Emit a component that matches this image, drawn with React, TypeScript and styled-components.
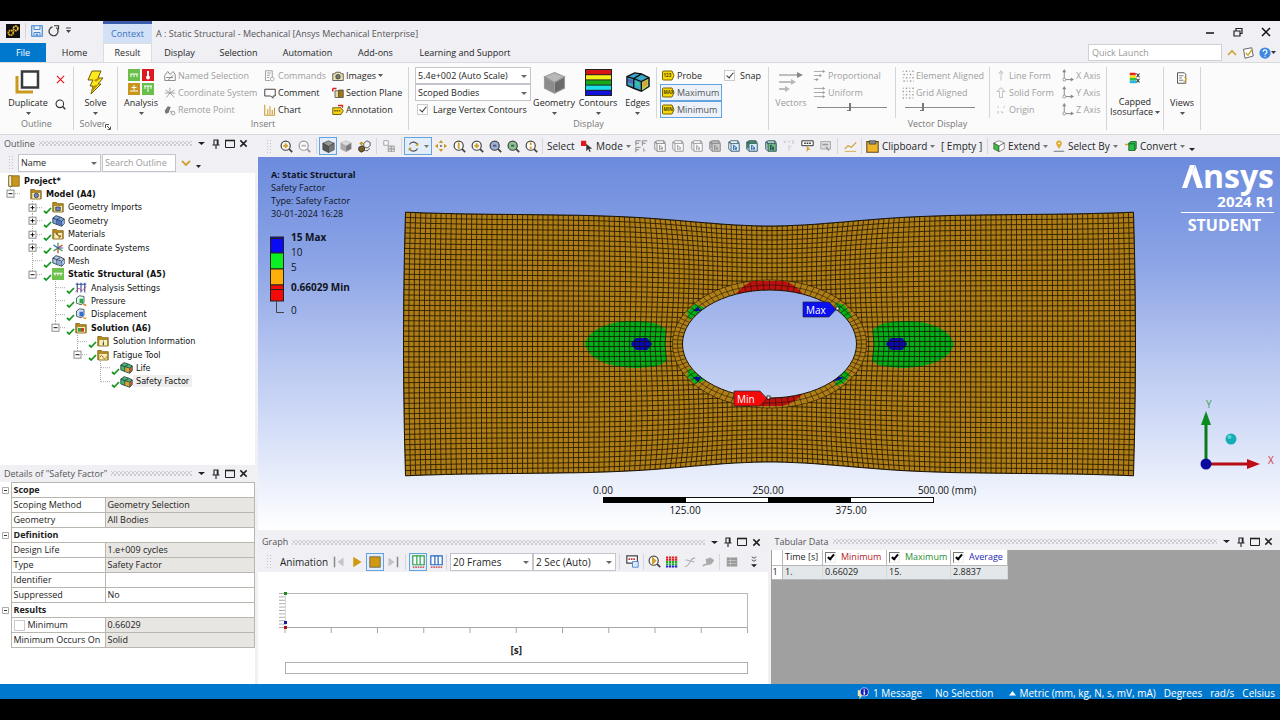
import React from "react";
import styled, { createGlobalStyle, css } from "styled-components";

const ui = `"Open Sans", "Noto Sans", sans-serif`;
const treeFont = `"DejaVu Sans Condensed", "DejaVu Sans", sans-serif`;

const GlobalStyle = createGlobalStyle`
  *, *::before, *::after { box-sizing: border-box; }
  body { margin: 0; background: #000; font-family: ${ui}; font-size: 9px; line-height: 12px; color: #262626; }
  button, input, select { font: inherit; color: inherit; margin: 0; }
  button { padding: 0; border: 0; background: none; cursor: pointer; }
  svg { display: block; flex: none; }
`;

/* ---------- frame ---------- */

const Page = styled.div`
  min-height: 100vh;
  display: flex;
  flex-direction: column;
  padding: 21px 0;
  background: #000;
`;

const Workspace = styled.main`
  flex: 1;
  display: flex;
  gap: 3px;
  background: #f0f0f5;
`;

const LeftDock = styled.aside`
  width: 255px;
  flex: none;
  display: flex;
  flex-direction: column;
`;

const Stage = styled.section`
  flex: 1;
  min-width: 0;
  display: flex;
  flex-direction: column;
`;

const BottomDock = styled.div`
  display: flex;
  gap: 3px;
  height: 151px;
  margin-top: 3px;
`;

const Panel = styled.section<{ $bg?: string }>`
  flex: 1;
  min-width: 0;
  display: flex;
  flex-direction: column;
  background: ${(p) => p.$bg || "#fff"};
`;

/* ---------- icons ---------- */

const Icon = ({ size = 12, vb = 16, children }: { size?: number; vb?: number; children: React.ReactNode }) => (
  <svg width={size} height={size} viewBox={`0 0 ${vb} ${vb}`} aria-hidden="true" fill="none">
    {children}
  </svg>
);

const Caret = ({ color = "#555", w = 5 }: { color?: string; w?: number }) => (
  <svg width={w} height="3" viewBox="0 0 6 3" aria-hidden="true" preserveAspectRatio="none">
    <path d="M0 0h6L3 3z" fill={color} />
  </svg>
);

const Cube = ({ top, left, right, size = 12, stroke = "#333" }: { top: string; left: string; right: string; size?: number; stroke?: string }) => (
  <Icon size={size}>
    <path d="M8 1l7 3-7 4-7-4z" fill={top} stroke={stroke} strokeWidth="0.7" />
    <path d="M1 4l7 4v7.500l-7-3.500z" fill={left} stroke={stroke} strokeWidth="0.7" />
    <path d="M15 4L8 8v7.500l7-3.500z" fill={right} stroke={stroke} strokeWidth="0.7" />
  </Icon>
);

const Zoomer = ({ inner, mark, ring = "#444", sign }: { inner?: string; mark?: string; ring?: string; sign?: string }) => (
  <Icon size={13}>
    <circle cx="7" cy="7" r="5.600" fill={inner || "#fff"} stroke={ring} strokeWidth="1.500" />
    <path d="M11 11l4 4" stroke={ring} strokeWidth="2.200" />
    {mark && <path d={sign || "M4 7h6M7 4v6"} stroke={mark} strokeWidth="2.400" />}
  </Icon>
);

const Blocks = ({ colors, size = 13 }: { colors: string[]; size?: number }) => (
  <Icon size={size}>
    <path d="M1 5l4-3 6 2 4 2v6l-3 3-6-2-5-2z" fill={colors[0]} stroke="#234" strokeWidth="1" />
    <path d="M1 5l5 2v6M6 7l4-2.500M6 7l6 2v6M12 9l3-3" stroke="#234" strokeWidth="1" />
    <path d="M6.500 7.600l5 1.700v5l-5-1.700z" fill={colors[1]} />
    <path d="M12.500 9.300l2.200-2.300v4.600l-2.200 2.200z" fill={colors[2]} />
  </Icon>
);

const Folder = ({ children }: { children?: React.ReactNode }) => (
  <Icon size={12}>
    <path d="M1 2h5l1.500 1.500H15V14.500H1z" fill="#b98b1c" stroke="#7a5c10" strokeWidth="1" />
    <path d="M2.500 6h11.500v8.500h-11.500z" fill="#f7eeb9" stroke="#8d6d16" strokeWidth="0.8" />
    {children}
  </Icon>
);

const Disk = () => (
  <Icon size={12}>
    <path d="M1 1h14v14H1z" stroke="#3b86d6" strokeWidth="1.500" />
    <path d="M4 1v5h8V1M4 15v-5h8v5M7 15v-3h2v3" stroke="#3b86d6" strokeWidth="1.300" />
  </Icon>
);

const NodeBox = ({ body = "#fff", accent, front = "#888", dot }: { body?: string; accent?: string; front?: string; dot?: string }) => (
  <Icon size={12}>
    <path d="M1 12V3l3-2h9v3" fill={accent || "#fff"} stroke={front} strokeWidth="1.300" />
    <path d="M1 3h3M1 3l3 2M13 1l2 3M1 12l3 3" stroke={front} strokeWidth="1.200" />
    <path d="M4 4.500h11V15H4z" fill={body} stroke={front} strokeWidth="1.300" />
    <path d="M7.500 7l4.500 4h-2l1 3M7.500 7v6l2-2" stroke={dot || front} strokeWidth="1.200" />
  </Icon>
);

const Chip = ({ text }: { text: string }) => (
  <svg width="13" height="11" viewBox="0 0 26 22" aria-hidden="true">
    <path d="M3 2h17l4 9-4 9H3q-2 0-2-2V4q0-2 2-2z" fill="#f5d90c" stroke="#7a6200" strokeWidth="2" />
    <text x="3" y="14" fontSize="9" fontWeight="700" fill="#4a3c00">{text}</text>
  </svg>
);

/* ---------- title bar and tabs ---------- */

const TitleBar = styled.header`
  height: 22px;
  display: flex;
  align-items: stretch;
  background: #efeff4;
`;

const QuickAccess = styled.div`
  width: 103px;
  display: flex;
  align-items: center;
  gap: 5px;
  padding: 0 0 3px 6px;
`;

const IconButton = styled.button<{ $w?: number }>`
  width: ${(p) => (p.$w ? `${p.$w}px` : "auto")};
  height: 18px;
  display: flex;
  align-items: center;
  justify-content: center;
`;

const ContextTab = styled.div`
  width: 49px;
  padding-top: 4px;
  border-top: 3px solid #3a5ca8;
  background: #d2e1f6;
  color: #3b6fc0;
  text-align: center;
`;

const WindowTitle = styled.h1`
  flex: 1;
  margin: 0;
  padding: 7px 0 0 4px;
  font-size: 9px;
  line-height: 12px;
  font-weight: 400;
  color: #555;
`;

const WindowButtons = styled.div`
  display: flex;
  align-items: center;
  gap: 11px;
  padding-right: 6px;
`;

const TabRow = styled.nav`
  height: 19px;
  display: flex;
  background: #efeff4;
`;

const Tab = styled.button<{ $w: number; $kind?: "file" | "active" }>`
  width: ${(p) => p.$w}px;
  height: 19px;
  text-align: center;
  ${(p) => p.$kind === "file" && css`background: #0078cd; color: #fff;`}
  ${(p) => p.$kind === "active" && css`background: #fbfbfb; border: 1px solid #dcdce0; border-bottom: 0;`}
`;

const TabTools = styled.div`
  margin-left: auto;
  display: flex;
  align-items: center;
  gap: 5px;
  padding-right: 4px;
`;

const QuickLaunch = styled.input`
  width: 134px;
  height: 17px;
  padding: 0 3px;
  border: 1px solid #cfcfd4;
  background: #fff;
  &::placeholder { color: #999; opacity: 1; }
`;

/* ---------- ribbon ---------- */

const Ribbon = styled.section`
  height: 73px;
  display: flex;
  padding: 4px 0;
  background: #fbfbfb;
  border-top: 1px solid #dadade;
  border-bottom: 1px solid #d8d8dc;
`;

const GroupBox = styled.div<{ $w: number }>`
  width: ${(p) => p.$w}px;
  flex: none;
  border-right: 1px solid #d4d4d8;
`;

const GroupBody = styled.div<{ $pl?: number }>`
  height: 51px;
  display: flex;
  padding-left: ${(p) => p.$pl || 0}px;
`;

const GroupName = styled.div`
  display: flex;
  justify-content: center;
  align-items: flex-end;
  line-height: 12px;
  color: #777;
`;

const Group = ({ name, w, pl, launcher, children }: { name?: string; w: number; pl?: number; launcher?: boolean; children: React.ReactNode }) => (
  <GroupBox $w={w}>
    <GroupBody $pl={pl}>{children}</GroupBody>
    <GroupName>
      {name}
      {launcher && <Icon size={6} vb={6}><path d="M0.500 4V0.500H4M2 2l3 3M5.500 2.500v3h-3" stroke="#555" /></Icon>}
    </GroupName>
  </GroupBox>
);

const BigButton = styled.button<{ $w: number; $off?: boolean }>`
  width: ${(p) => p.$w}px;
  height: 51px;
  display: grid;
  grid-template-rows: 30px 12px 9px;
  justify-items: center;
  align-items: center;
  white-space: nowrap;
  color: ${(p) => (p.$off ? "#9a9a9a" : "#262626")};
`;

const RaisedIcon = styled.span`
  align-self: start;
  padding-top: 5px;
`;

const TwoLine = styled.span`
  line-height: 10px;
  align-self: start;
  display: grid;
  justify-items: center;
`;

const Inline = styled.span`
  display: flex;
  align-items: center;
  gap: 2px;
`;

const Column = styled.div<{ $w: number }>`
  width: ${(p) => p.$w}px;
  flex: none;
  display: grid;
  grid-template-rows: repeat(3, 17px);
  align-items: center;
`;

const PairColumn = styled(Column)`
  grid-template-rows: repeat(2, 25px);
`;

const SmallButton = styled.button<{ $off?: boolean; $on?: boolean }>`
  height: 17px;
  display: flex;
  align-items: center;
  gap: 2px;
  white-space: nowrap;
  text-align: left;
  color: ${(p) => (p.$off ? "#a0a0a0" : "#262626")};
  ${(p) => p.$on && css`border: 1px solid #62a4e0; background: #edf2fa; color: #555;`}
`;

const ProbeButton = styled(SmallButton)`
  width: 62px;
  padding-left: ${(p) => (p.$on ? 1 : 2)}px;
`;

const Divider = styled.i<{ $h?: number; $m?: string }>`
  width: 1px;
  height: ${(p) => p.$h || 51}px;
  margin: ${(p) => p.$m || "0 3px 0 0"};
  background: #d6d6da;
  flex: none;
`;

const SelectShell = styled.span<{ $w: number; $h?: number; $fs?: number }>`
  position: relative;
  width: ${(p) => p.$w}px;
  height: ${(p) => p.$h || 17}px;
  display: block;
  flex: none;
  font-size: ${(p) => p.$fs || 9}px;
  svg { position: absolute; right: 4px; top: 50%; margin-top: -1px; pointer-events: none; }
  select {
    appearance: none;
    width: 100%;
    height: 100%;
    padding: 0 2px;
    border: 1px solid #c4c4ca;
    border-radius: 0;
    background: #fff;
  }
`;

const Dropdown = ({ label, value, w, h, fs }: { label: string; value: string; w: number; h?: number; fs?: number }) => (
  <SelectShell $w={w} $h={h} $fs={fs}>
    <select aria-label={label} defaultValue={value}>
      <option>{value}</option>
    </select>
    <Caret color="#666" w={6} />
  </SelectShell>
);

const CheckLabel = styled.label<{ $pl?: number; $gap?: number }>`
  display: flex;
  align-items: center;
  gap: ${(p) => p.$gap ?? 5}px;
  padding-left: ${(p) => p.$pl || 0}px;
  white-space: nowrap;
`;

const CheckBox = styled.input.attrs({ type: "checkbox" })<{ $sunken?: boolean }>`
  appearance: none;
  position: relative;
  width: 11px;
  height: 11px;
  flex: none;
  border: 1px solid ${(p) => (p.$sunken ? "#777" : "#cacace")};
  ${(p) => p.$sunken && css`border-right-color: #eee; border-bottom-color: #eee;`}
  background: #fff;
  &:checked::after {
    content: "";
    position: absolute;
    left: 3px;
    top: 0;
    width: 4px;
    height: 7px;
    border: solid ${(p) => (p.$sunken ? "#000" : "#333")};
    border-width: 0 ${(p) => (p.$sunken ? 2 : 1)}px ${(p) => (p.$sunken ? 2 : 1)}px 0;
    transform: rotate(40deg);
  }
`;

const Slider = styled.input.attrs({ type: "range" })`
  appearance: none;
  width: 70px;
  height: 9px;
  margin: 0 0 5px 4px;
  background: linear-gradient(#8a8a8a, #8a8a8a) 0 4px / 100% 1px no-repeat;
  &::-webkit-slider-thumb {
    appearance: none;
    width: 4px;
    height: 8px;
    border: solid #777;
    border-width: 0 2px 1px 0;
    background: transparent;
  }
`;

const Duplicate = () => (
  <Icon size={26} vb={26}>
    <path d="M2 7v16h16" stroke="#c99a1e" strokeWidth="3" />
    <path d="M7 2.500h16v16H7z" fill="#fff" stroke="#3a3a3a" strokeWidth="2.500" />
  </Icon>
);

const Bolt = () => (
  <Icon size={25} vb={25}>
    <path d="M9 1h9l-3 7h5l-5 6h3l-10 10 2-8H7l3-6H5z" fill="#ffe81c" stroke="#6d5a10" strokeWidth="1" />
    <path d="M16 14l-8 9 2-7zM11 10l4-2h3l-5 4z" fill="#b8920a" />
  </Icon>
);

const AnalysisIcon = () => (
  <Icon size={26} vb={26}>
    <path d="M0 0h12v12H0z" fill="#6abf4b" />
    <path d="M14 0h12v12H14z" fill="#dd1a24" />
    <path d="M0 14h12v12H0z" fill="#c8961a" />
    <path d="M14 14h12v12H14z" fill="#6abf4b" />
    <path d="M2 5h8M3 5v3M6 5v3M9 5v3M2 22h8M6 16v5M3.500 18.500h5M16 17h8M17 17v3M20 17v6M23 17v3" stroke="#fff" strokeWidth="1" />
    <path d="M20 2v5" stroke="#fff" strokeWidth="2" />
    <circle cx="20" cy="8.500" r="2" fill="#fff" />
  </Icon>
);

const ContourIcon = () => (
  <Icon size={27} vb={27}>
    <path d="M0 0h27v27H0z" fill="#222" />
    {["#d81414", "#f4f01a", "#17a81c", "#1ce0e8", "#1212d8"].map((c, i) => (
      <rect key={c} x="1" y={1 + i * 5.2} width="25" height="4.200" fill={c} />
    ))}
  </Icon>
);

const EdgesIcon = () => (
  <Icon size={24} vb={25}>
    <path d="M1 7l8-4 7 1 8 4v9l-8 5-8-3-7-3z" fill="#3aa6c8" stroke="#111" strokeWidth="1.500" />
    <path d="M16 12l7-4v9l-7 5z" fill="#b8cc4a" />
    <path d="M1 7l7 2 8 3 8-4M8 9l8-5M8 9v10M16 12v10" stroke="#111" strokeWidth="1.400" />
    <path d="M2 9l5 1.500v4l-5-2z" fill="#5464b8" />
    <path d="M18 13l4-2v4l-4 3z" fill="#e49a3c" />
    <path d="M10 12l4 1.500v4l-4-2z" fill="#35c49a" />
  </Icon>
);

const VectorsIcon = () => (
  <Icon size={24} vb={24}>
    <path d="M0 5h20M0 12h13M0 19h7" stroke="#aaa" strokeWidth="1.400" />
    <path d="M24 5l-6-3v6z" fill="#888" />
    <path d="M17 12l-5-3v6zM11 19l-5-3v6z" fill="#b8b8b8" />
  </Icon>
);

const FlowIcon = ({ even }: { even?: boolean }) => (
  <Icon size={13}>
    <path d={even ? "M1 3h12M1 8h12M1 13h12" : "M1 3h12M1 8h9M1 13h5"} stroke="#aaa" strokeWidth="1.200" />
    <path d={even ? "M15 3l-3-2v4zM15 8l-3-2v4zM15 13l-3-2v4z" : "M15 3l-3-2v4zM11 8l-3-2v4zM7 13l-3-2v4z"} fill="#999" />
  </Icon>
);

const DotsIcon = ({ free }: { free?: boolean }) => (
  <Icon size={13}>
    {[2, 6, 10, 14].map((x, i) =>
      [2, 6, 10, 14].map((y, j) => (
        <rect key={`${x}-${y}`} x={x + (free && j % 2 ? 1 : 0)} y={y} width="1.600" height="1.600" fill={(i + j) % 2 ? "#888" : "#bbb"} />
      )),
    )}
  </Icon>
);

const AxisIcon = () => (
  <Icon size={13}>
    <path d="M4 13V3M4 13h9" stroke="#888" strokeWidth="1.200" />
    <path d="M4 0l-2.500 4h5zM16 13l-4-2.500v5z" fill="#888" />
    <circle cx="4" cy="13" r="1.800" fill="#fff" stroke="#888" />
  </Icon>
);

const UpIcon = ({ wide }: { wide?: boolean }) => (
  <Icon size={12}>
    <path d={wide ? "M8 1l5 5h-3v8H6V6H3z" : "M8 2v12M8 1L5 5M8 1l3 4"} stroke="#c6c6c6" strokeWidth="1.400" />
  </Icon>
);

function RibbonBar() {
  return (
    <Ribbon>
      <Group name="Outline" w={74} pl={4}>
        <BigButton $w={48}>
          <Duplicate />
          <span>Duplicate</span>
          <Caret />
        </BigButton>
        <PairColumn $w={16}>
          <IconButton $w={16} aria-label="Delete">
            <Icon size={9} vb={10}><path d="M1 1l8 8M9 1L1 9" stroke="#e0202c" strokeWidth="1.400" /></Icon>
          </IconButton>
          <IconButton $w={16} aria-label="Find">
            <Icon size={11}><circle cx="7" cy="7" r="5.500" stroke="#333" strokeWidth="1.600" /><path d="M11 11l4 4" stroke="#333" strokeWidth="2" /></Icon>
          </IconButton>
        </PairColumn>
      </Group>

      <Group name="Solver" w={44} launcher>
        <BigButton $w={43}><Bolt /><span>Solve</span><Caret /></BigButton>
      </Group>

      <Group name="Insert" w={291}>
        <BigButton $w={46}><AnalysisIcon /><span>Analysis</span><Caret /></BigButton>
        <Column $w={100}>
          <SmallButton $off>
            <Icon><path d="M1 14V7l4-5 3 4 4-4 3 4v8zM3 10h9M5 14l7-7" stroke="#8a8a8a" strokeWidth="1.300" /></Icon>Named Selection
          </SmallButton>
          <SmallButton $off>
            <Icon><path d="M8 8V1M8 8L2 4M8 8l6-4M8 8l-5 6M8 8l6 6M8 8h7M8 8H1" stroke="#9a9a9a" strokeWidth="1.200" /></Icon>Coordinate System
          </SmallButton>
          <SmallButton $off>
            <Icon><path d="M1 9l4-6 4 1-3 8-4 1z" fill="#777" /><circle cx="12" cy="12" r="2.500" stroke="#888" /><path d="M8 10l3 1" stroke="#888" /></Icon>Remote Point
          </SmallButton>
        </Column>
        <Column $w={68}>
          <SmallButton $off>
            <Icon><path d="M2 1h9v9M2 1v13h6M4 4h5M4 7h4M4 10h3" stroke="#999" strokeWidth="1.200" /><circle cx="11" cy="12" r="2.500" stroke="#999" /></Icon>Commands
          </SmallButton>
          <SmallButton>
            <Icon><path d="M1 3h14v9h-3v3l-3-3H1z" stroke="#444" strokeWidth="1.300" /></Icon>Comment
          </SmallButton>
          <SmallButton>
            <Icon><path d="M1 1v14h14M5 14V7M8 14V3M11 14V8M14 14V5" stroke="#c79a2a" strokeWidth="1.400" /></Icon>Chart
          </SmallButton>
        </Column>
        <Column $w={76}>
          <SmallButton>
            <Icon><path d="M1 5h3l1-2h6l1 2h3v9H1z" fill="#ece0ac" stroke="#555" strokeWidth="1.200" /><circle cx="8" cy="9" r="3" fill="#777" stroke="#333" /></Icon>Images<Caret />
          </SmallButton>
          <SmallButton>
            <Icon><path d="M4 5h5v9H4z" fill="#e8d9a0" stroke="#444" /><path d="M9 4h6v10H9z" fill="#a37a12" stroke="#444" /><path d="M1 2h5M1 2v4" stroke="#d22" strokeWidth="2" /></Icon>Section Plane
          </SmallButton>
          <SmallButton>
            <Icon><path d="M1 5h11l3 4-3 5H1z" fill="#f4d310" stroke="#6d5700" strokeWidth="1.200" /><path d="M3 9h8" stroke="#6d5700" strokeWidth="2" strokeDasharray="2 1" /><path d="M8 2h6v3" stroke="#d22" strokeWidth="1.800" /></Icon>Annotation
          </SmallButton>
        </Column>
      </Group>

      <Group name="Display" w={360} pl={6}>
        <Column $w={116}>
          <Dropdown label="Result scale" value="5.4e+002 (Auto Scale)" w={116} />
          <Dropdown label="Scoped bodies" value="Scoped Bodies" w={116} />
          <CheckLabel $pl={2}><CheckBox defaultChecked />Large Vertex Contours</CheckLabel>
        </Column>
        <BigButton $w={46}><Cube size={23} top="#b8b8b8" left="#8c8c8c" right="#6a6a6a" stroke="#999" /><span>Geometry</span><Caret /></BigButton>
        <BigButton $w={42}><ContourIcon /><span>Contours</span><Caret /></BigButton>
        <BigButton $w={37}><EdgesIcon /><span>Edges</span><Caret /></BigButton>
        <Divider />
        <Column $w={64}>
          <ProbeButton><Chip text="123" />Probe</ProbeButton>
          <ProbeButton $on><Chip text="MAX" />Maximum</ProbeButton>
          <ProbeButton $on><Chip text="MIN" />Minimum</ProbeButton>
        </Column>
        <Column $w={44}>
          <CheckLabel><CheckBox defaultChecked />Snap</CheckLabel>
        </Column>
      </Group>

      <Group name="Vector Display" w={338}>
        <BigButton $w={44} $off disabled><VectorsIcon /><span>Vectors</span></BigButton>
        <Column $w={82}>
          <SmallButton $off><FlowIcon />Proportional</SmallButton>
          <SmallButton $off><FlowIcon even />Uniform</SmallButton>
          <Slider aria-label="Vector scale" defaultValue={46} />
        </Column>
        <Divider $m="0 5px 0 0" />
        <Column $w={88}>
          <SmallButton $off><DotsIcon free />Element Aligned</SmallButton>
          <SmallButton $off><DotsIcon />Grid Aligned</SmallButton>
          <Slider aria-label="Vector density" defaultValue={22} />
        </Column>
        <Divider $m="0 5px 0 0" />
        <Column $w={66}>
          <SmallButton $off><UpIcon />Line Form</SmallButton>
          <SmallButton $off><UpIcon wide />Solid Form</SmallButton>
          <SmallButton $off><Icon><path d="M3 3l2 2M13 3l-2 2M4 13V9M8 10l3 2" stroke="#c6c6c6" strokeWidth="1.400" /></Icon>Origin</SmallButton>
        </Column>
        <Column $w={45}>
          <SmallButton $off><AxisIcon />X Axis</SmallButton>
          <SmallButton $off><AxisIcon />Y Axis</SmallButton>
          <SmallButton $off><AxisIcon />Z Axis</SmallButton>
        </Column>
      </Group>

      <Group w={57}>
        <BigButton $w={57}>
          <RaisedIcon>
            <Icon size={12}>
              <path d="M1 1h8v3.500H1z" fill="#e8201c" /><path d="M1 4.500h8V8H1z" fill="#f2dd18" /><path d="M1 8h9v3.500H1z" fill="#27c246" /><path d="M1 11.500h9V15H1z" fill="#29b3e6" />
              <path d="M10 2l4 5M14 2l-4 5M10 9l4 5M14 9l-4 5" stroke="#333" strokeWidth="1.500" />
            </Icon>
          </RaisedIcon>
          <TwoLine><span>Capped</span><Inline>Isosurface<Caret /></Inline></TwoLine>
        </BigButton>
      </Group>
      <Group w={37}>
        <BigButton $w={37}>
          <RaisedIcon>
            <Icon size={12}>
              <path d="M2 1h9l2 2v12H2z" fill="#fff" stroke="#555" strokeWidth="1.300" /><path d="M4 5h6M4 8h4M4 11h6" stroke="#555" /><path d="M11 7l3 2-4 5" stroke="#d8b030" strokeWidth="1.600" />
            </Icon>
          </RaisedIcon>
          <span>Views</span>
          <Caret />
        </BigButton>
      </Group>
    </Ribbon>
  );
}

/* ---------- panels ---------- */

const PanelHead = styled.header<{ $h: number }>`
  height: ${(p) => p.$h}px;
  flex: none;
  display: flex;
  align-items: center;
  gap: 4px;
  padding: 0 6px 0 4px;
  background: #efeff4;
  color: #555;
`;

const PanelTitle = styled.h2`
  margin: 0;
  font-size: 9px;
  line-height: 12px;
  font-weight: 400;
  white-space: nowrap;
`;

const Texture = styled.i`
  flex: 1;
  height: 5px;
  background:
    radial-gradient(circle, #cdcdd3 1px, transparent 1px) 0 0 / 4px 4px,
    radial-gradient(circle, #cdcdd3 1px, transparent 1px) 2px 2px / 4px 4px;
`;

const HeadButtons = styled.span`
  display: flex;
  align-items: center;
  gap: 3px;
  button { width: 11px; height: 12px; display: grid; place-items: center; }
`;

const PanelHeader = ({ title, h = 17 }: { title: string; h?: number }) => (
  <PanelHead $h={h}>
    <PanelTitle>{title}</PanelTitle>
    <Texture />
    <HeadButtons>
      <button aria-label="Panel menu"><Caret color="#222" w={7} /></button>
      <button aria-label="Pin"><Icon size={10} vb={10}><path d="M3 1h4v5H3zM1.500 6h7M5 6v4M6.300 1v5" stroke="#222" strokeWidth="1.100" /></Icon></button>
      <button aria-label="Maximize"><Icon size={10} vb={10}><path d="M0.500 1.500h9v7h-9z" stroke="#222" strokeWidth="1" /><path d="M0 1.500h10" stroke="#222" strokeWidth="1.600" /></Icon></button>
      <button aria-label="Close"><Icon size={9} vb={10}><path d="M1.500 1.500l7 7M8.500 1.500l-7 7" stroke="#222" strokeWidth="1.700" /></Icon></button>
    </HeadButtons>
  </PanelHead>
);

const Grip = styled.i<{ $m?: string }>`
  width: 5px;
  height: 15px;
  flex: none;
  margin: ${(p) => p.$m || "0 5px"};
  background: radial-gradient(circle, #c4c4ca 1px, transparent 1px) 0 0 / 3px 3px;
`;

const FilterRow = styled.div`
  height: 21px;
  flex: none;
  display: flex;
  align-items: center;
  padding-left: 3px;
  background: #efeff4;
`;

const SearchOutline = styled.input`
  width: 74px;
  height: 18px;
  margin: 0 3px 0 1px;
  padding: 0 2px;
  border: 1px solid #c4c4ca;
  background: #fff;
  &::placeholder { color: #9a9a9a; opacity: 1; }
`;

const OverflowButton = styled.button`
  width: 13px;
  height: 18px;
  flex: none;
  display: flex;
  align-items: flex-end;
  justify-content: center;
  padding-bottom: 4px;
`;

const TreeArea = styled.div`
  flex: 1;
  background: #fff;
  padding-top: 1px;
`;

const Tree = styled.ul`
  height: 214px;
  margin: 0;
  padding: 0;
  list-style: none;
  display: grid;
  grid-template-rows: repeat(16, 1fr);
  font-family: ${treeFont};
  color: #111;
`;

const TreeRow = styled.li<{ $indent: number; $bold?: boolean }>`
  display: flex;
  align-items: center;
  min-height: 0;
  padding-left: ${(p) => p.$indent}px;
  font-weight: ${(p) => (p.$bold ? 700 : 400)};
`;

const IconSlot = styled.span<{ $w: number }>`
  width: ${(p) => p.$w}px;
  flex: none;
  display: flex;
`;

const CheckSlot = styled(IconSlot)`
  align-self: flex-end;
`;

const TreeLabel = styled.span<{ $on?: boolean }>`
  padding: 0 3px;
  line-height: 12px;
  white-space: nowrap;
  background: ${(p) => (p.$on ? "#efefef" : "transparent")};
`;

const Branch = ({ mark, last }: { mark?: "+" | "-"; last?: boolean }) => (
  <svg width="21" height="100%" aria-hidden="true">
    <line x1="10.500" x2="10.500" y1="0" y2={last ? "50%" : "100%"} stroke="#aaa" strokeDasharray="1 1" />
    <line x1="11" x2="21" y1="50%" y2="50%" stroke="#aaa" strokeDasharray="1 1" />
    {mark && (
      <svg x="6" y="50%" width="10" height="10" overflow="visible">
        <rect x="1" y="-3.500" width="7" height="7" fill="#fff" stroke="#8c8c8c" />
        <path d={mark === "+" ? "M2.500 0h4M4.500-2v4" : "M2.500 0h4"} stroke="#111" />
      </svg>
    )}
  </svg>
);

const Check = () => (
  <Icon size={9} vb={9}><path d="M1 6l2.200 2L8 3" stroke="#12961c" strokeWidth="1.700" /></Icon>
);

const multi = ["#4ab86a", "#e0a030", "#d84a30"];
const blue = ["#b4c8e4", "#8aa8d4", "#a9c6ea"];

const treeIcons: Record<string, React.ReactNode> = {
  model: <Folder><circle cx="8.500" cy="10" r="3" fill="#6c86c0" stroke="#334" /></Folder>,
  imports: <Folder><path d="M5 8h6v5H5z" fill="#6c86c0" stroke="#334" /></Folder>,
  geometry: <Blocks colors={["#7aa2dc", "#4a74c4", "#90b4e6"]} />,
  materials: <Folder><path d="M5 7l6 5M5 7h3M9 13l3-3" stroke="#a06a20" strokeWidth="2" /></Folder>,
  coords: <Icon><path d="M8 8V1M8 8l6 4M8 8l-6 4" stroke="#2a9a3a" strokeWidth="1.600" /><path d="M8 8l6-4M8 8v7" stroke="#cc3030" strokeWidth="1.600" /><path d="M8 8L2 4M8 8h7" stroke="#3060cc" strokeWidth="1.600" /></Icon>,
  mesh: <Blocks colors={blue} />,
  static: <Icon><path d="M0 0h16v16H0z" fill="#6cc24a" /><path d="M2 7h12M4 7v3M8 7v3M12 7v3" stroke="#fff" strokeWidth="1.500" /></Icon>,
  settings: <Icon><path d="M1 3h14M3 1v13M8 1v13M13 1v13" stroke="#334c9c" strokeWidth="1.500" /><path d="M1 13l4-5 4 4 6-6" stroke="#c03060" /></Icon>,
  pressure: <Icon><path d="M2 4l4-3 6 1v8l-4 3-6-2z" fill="#dfe" stroke="#333" /><path d="M6 5h5v6H6z" fill="#2aa84a" /><path d="M11 12l4 2" stroke="#e08020" strokeWidth="2" /></Icon>,
  displacement: <Icon><path d="M2 4l4-3 6 1v8l-4 3-6-2z" fill="#cfe0f8" stroke="#333" /><path d="M6 5h5v6H6z" fill="#2f6fd0" /><path d="M11 13l4 1" stroke="#e0a020" strokeWidth="2" /></Icon>,
  solution: <Folder><path d="M4 8h4v5H4z" fill="#2aa84a" /><path d="M8 8h4v5H8z" fill="#c84028" /></Folder>,
  info: <Folder><path d="M8.500 7.500v1.200M8.500 9.500v4" stroke="#333" strokeWidth="1.400" /></Folder>,
  fatigue: <Folder><path d="M4 11q2-5 4 0t5-1" stroke="#a06a10" strokeWidth="1.200" /></Folder>,
  result: <Blocks colors={multi} />,
};

type NodeDef = { label: string; icon: string; level: number; mark?: "+" | "-"; last?: boolean; bold?: boolean; noCheck?: boolean; on?: boolean };
const nodes: NodeDef[] = [
  { label: "Model (A4)", icon: "model", level: 0, mark: "-", last: true, bold: true, noCheck: true },
  { label: "Geometry Imports", icon: "imports", level: 1, mark: "+" },
  { label: "Geometry", icon: "geometry", level: 1, mark: "+" },
  { label: "Materials", icon: "materials", level: 1, mark: "+" },
  { label: "Coordinate Systems", icon: "coords", level: 1, mark: "+" },
  { label: "Mesh", icon: "mesh", level: 1 },
  { label: "Static Structural (A5)", icon: "static", level: 1, mark: "-", last: true, bold: true },
  { label: "Analysis Settings", icon: "settings", level: 2 },
  { label: "Pressure", icon: "pressure", level: 2 },
  { label: "Displacement", icon: "displacement", level: 2 },
  { label: "Solution (A6)", icon: "solution", level: 2, mark: "-", last: true, bold: true },
  { label: "Solution Information", icon: "info", level: 3 },
  { label: "Fatigue Tool", icon: "fatigue", level: 3, mark: "-", last: true },
  { label: "Life", icon: "result", level: 4 },
  { label: "Safety Factor", icon: "result", level: 4, last: true, on: true },
];
const indents = [0, 22, 45, 67, 90];

function OutlinePanel() {
  return (
    <>
      <PanelHeader title="Outline" />
      <FilterRow>
        <Grip />
        <Dropdown label="Filter by" value="Name" w={83} h={18} fs={9} />
        <SearchOutline placeholder="Search Outline" aria-label="Search outline" />
        <IconButton $w={13} aria-label="Expand"><Icon size={10} vb={10}><path d="M1 3l4 4 4-4" stroke="#d0a030" strokeWidth="1.800" /></Icon></IconButton>
        <OverflowButton aria-label="More"><Caret color="#222" /></OverflowButton>
      </FilterRow>
      <TreeArea>
        <Tree>
          <TreeRow $indent={8} $bold>
            <IconSlot $w={13}><Icon><path d="M1 1h14v14H1z" fill="#c8961a" stroke="#7a5c10" /><path d="M1 1h4v14H1z" fill="#f4ecd0" stroke="#7a5c10" /></Icon></IconSlot>
            <TreeLabel>Project*</TreeLabel>
          </TreeRow>
          {nodes.map((n) => (
            <TreeRow key={n.label} $indent={indents[n.level]} $bold={n.bold}>
              <Branch mark={n.mark} last={n.last} />
              <CheckSlot $w={9}>{!n.noCheck && <Check />}</CheckSlot>
              <IconSlot $w={13}>{treeIcons[n.icon]}</IconSlot>
              <TreeLabel $on={n.on}>{n.label}</TreeLabel>
            </TreeRow>
          ))}
        </Tree>
      </TreeArea>
    </>
  );
}

const DetailsArea = styled.div`
  height: 202px;
  flex: none;
  background: #fff;
`;

const DetailsTable = styled.table`
  width: 100%;
  table-layout: fixed;
  border-collapse: collapse;
  color: #222;
  tr { height: 15px; }
  th, td { padding: 0 0 0 2px; height: 15px; line-height: 12px; text-align: left; font-weight: 400; border: 1px solid #b9b6b0; white-space: nowrap; }
  .gutter { padding: 0 0 0 1px; border: 0; }
`;

const SectionCell = styled.th`
  && { font-weight: 700; }
`;

const ValueCell = styled.td<{ $locked?: boolean }>`
  background: ${(p) => (p.$locked ? "#e8e6e2" : "#fff")};
`;

type Detail = { section?: string; name?: string; value?: string; locked?: boolean; box?: boolean };
const details: Detail[] = [
  { section: "Scope" },
  { name: "Scoping Method", value: "Geometry Selection", locked: true },
  { name: "Geometry", value: "All Bodies", locked: true },
  { section: "Definition" },
  { name: "Design Life", value: "1.e+009 cycles", locked: true },
  { name: "Type", value: "Safety Factor", locked: true },
  { name: "Identifier", value: "" },
  { name: "Suppressed", value: "No" },
  { section: "Results" },
  { name: "Minimum", value: "0.66029", locked: true, box: true },
  { name: "Minimum Occurs On", value: "Solid", locked: true },
];

function DetailsPanel() {
  return (
    <>
      <PanelHeader title={'Details of "Safety Factor"'} />
      <DetailsArea>
        <DetailsTable>
          <colgroup><col width="11" /><col width="94" /><col /></colgroup>
          <tbody>
            {details.map((d, i) => (
              <tr key={i}>
                <td className="gutter">
                  {d.section && <Icon size={9} vb={9}><path d="M1.500 1.500h6v6h-6z" fill="#fff" stroke="#aaa" /><path d="M3 4.500h3" stroke="#333" /></Icon>}
                </td>
                {d.section ? (
                  <SectionCell colSpan={2}>{d.section}</SectionCell>
                ) : (
                  <>
                    <th>{d.box ? <CheckLabel $gap={3}><CheckBox />{d.name}</CheckLabel> : d.name}</th>
                    <ValueCell $locked={d.locked}>{d.value}</ValueCell>
                  </>
                )}
              </tr>
            ))}
          </tbody>
        </DetailsTable>
      </DetailsArea>
    </>
  );
}

/* ---------- graphics toolbar ---------- */

const Toolbar = styled.div<{ $h: number }>`
  height: ${(p) => p.$h}px;
  flex: none;
  display: flex;
  align-items: center;
  overflow: hidden;
  background: #efeff4;
  font-size: 10px;
`;

const Tool = styled.button<{ $w?: number; $on?: boolean }>`
  width: ${(p) => p.$w || 18}px;
  height: 18px;
  flex: none;
  display: flex;
  align-items: center;
  justify-content: center;
  gap: 4px;
  ${(p) => p.$on && css`border: 1px solid #62a4e0; background: #e4eefa;`}
`;

const ToolText = styled.button<{ $w: number }>`
  width: ${(p) => p.$w}px;
  height: 18px;
  flex: none;
  display: flex;
  align-items: center;
  gap: 3px;
  white-space: nowrap;
`;

const ToolRule = styled.i<{ $m?: string }>`
  width: 1px;
  height: 16px;
  flex: none;
  margin: ${(p) => p.$m || "0 4px"};
  background: #d6d6dc;
`;

function GraphicsToolbar() {
  return (
    <Toolbar $h={22}>
      <Grip $m="0 6px 0 8px" />
      <Tool aria-label="Zoom in"><Zoomer mark="#d0a030" /></Tool>
      <Tool aria-label="Zoom out"><Zoomer ring="#999" mark="#bbb" sign="M4 7h6" /></Tool>
      <ToolRule $m="0 2px 0 3px" />
      <Tool $on aria-label="Shaded exterior"><Cube top="#999" left="#555" right="#777" size={13} /></Tool>
      <Tool aria-label="Shaded"><Cube top="#ddd" left="#aaa" right="#777" stroke="#aaa" /></Tool>
      <Tool aria-label="Parts"><Icon size={13}><path d="M1 9l4-2 3 2v4l-4 2-3-2z" fill="#7a5c20" stroke="#222" /><path d="M7 4l4-3 4 2v4l-4 3-4-2z" fill="#eee" stroke="#444" /><circle cx="4" cy="4" r="2" fill="#c8961a" /><path d="M9 13q4 1 5-3" stroke="#333" /></Icon></Tool>
      <ToolRule $m="0 3px" />
      <Tool aria-label="Explode"><Icon><path d="M1 1h6v6H1z" fill="#fff" stroke="#888" /><path d="M7 8h8v8H7zM11 8v8M7 12h8" fill="#ddd" stroke="#888" /></Icon></Tool>
      <ToolRule $m="0 2px 0 3px" />
      <Tool $w={28} $on aria-label="Rotate"><Icon size={13}><path d="M3 5.500A5.600 5.600 0 0112.500 5M13 10.500a5.600 5.600 0 01-9.500 1" stroke="#555" strokeWidth="1.300" /><path d="M14 3v4h-4zM2 13.500v-4h4z" fill="#c99a1e" /></Icon><Caret color="#777" /></Tool>
      <Tool aria-label="Pan"><Icon size={12}><path d="M8 0l3 4H5zM8 16l3-4H5zM0 8l4-3v6zM16 8l-4-3v6z" fill="#c99a1e" /><path d="M7 7h2v2H7z" fill="#333" /></Icon></Tool>
      <Tool aria-label="Zoom"><Zoomer mark="#d0a030" sign="M7 3v8" /></Tool>
      <Tool aria-label="Box zoom"><Zoomer mark="#d0a030" /></Tool>
      <Tool aria-label="Zoom to fit"><Zoomer inner="#9ab0d8" mark="#557" sign="M5 7h4" /></Tool>
      <Tool aria-label="Magnifier"><Zoomer inner="#8cc48c" mark="#366" sign="M5 7h4" /></Tool>
      <Tool aria-label="Previous view"><Zoomer mark="#d0a030" sign="M7 3v3M7 8v3" /></Tool>
      <ToolRule $m="0 4px 0 2px" />
      <ToolText $w={34}>Select</ToolText>
      <ToolText $w={51}><Icon size={12}><path d="M0 1h7v7H0z" fill="#e01818" /><path d="M7 5v10l2.500-3 2 4 1.500-1-2-3.500h4z" fill="#333" /></Icon>Mode<Caret color="#777" /></ToolText>
      <Tool aria-label="Select labels"><Icon size={13}><path d="M1 7V1h6M1 4h4M9 7V1h6M9 4h4M1 15V9h6M1 12h4" stroke="#888" strokeWidth="1.200" /><path d="M10 9v6l2-2 2 2z" fill="#aaa" /></Icon></Tool>
      <Tool $w={19} aria-label="Vertex"><NodeBox /></Tool>
      <Tool aria-label="Edge"><NodeBox front="#999" /></Tool>
      <Tool $w={19} aria-label="Face"><NodeBox front="#999" /></Tool>
      <Tool aria-label="Body"><NodeBox front="#888" body="#ccc" accent="#bbb" /></Tool>
      <Tool $w={19} aria-label="Node"><NodeBox front="#456a80" body="#d8ecf4" dot="#2050b0" /></Tool>
      <Tool aria-label="Element face"><NodeBox front="#3c5a70" body="#d8ecf4" accent="#3a9c4a" dot="#2050b0" /></Tool>
      <Tool $w={19} aria-label="Element"><NodeBox front="#3c5a70" body="#6ab87a" accent="#b8e0c0" dot="#183060" /></Tool>
      <Tool aria-label="Coordinates"><Icon><path d="M1 1l3 3M4 1L1 4M7 1l1.500 2L10 1M12 1h3l-3 3h3M8 7v8M8 7l3 3" stroke="#c4c4c4" /></Icon></Tool>
      <Tool $w={19} aria-label="Label"><Icon size={13}><path d="M1 1h14v6H1z" fill="#fff" stroke="#333" strokeWidth="1.200" /><path d="M4 4h8" stroke="#333" strokeDasharray="2 1" strokeWidth="2" /><path d="M7 7v8l2-3h3z" fill="#d0a030" /></Icon></Tool>
      <Tool aria-label="Annotation"><Icon><path d="M1 2h13v10H1z" fill="#ddd" stroke="#999" /><path d="M3 6h8M8 9l4 5" stroke="#999" strokeWidth="2" /></Icon></Tool>
      <ToolRule $m="0 3px 0 2px" />
      <Tool aria-label="Chart"><Icon size={13}><path d="M1 11l4-4 4 2 6-6" stroke="#d0a030" strokeWidth="1.500" /><path d="M1 14h14" stroke="#d0a030" /></Icon></Tool>
      <ToolRule $m="0 4px 0 2px" />
      <ToolText $w={75}><Icon size={13}><path d="M1 2h14v13H1z" fill="#f0b428" stroke="#5a4a20" strokeWidth="1.300" /><path d="M4 1h8v4H4z" fill="#888" stroke="#444" /></Icon>Clipboard<Caret color="#777" /></ToolText>
      <ToolText $w={44}>[ Empty ]</ToolText>
      <ToolRule $m="0 5px 0 2px" />
      <ToolText $w={60}><Cube top="#fff" left="#3cc03c" right="#fff" />Extend<Caret color="#777" /></ToolText>
      <ToolText $w={72}><Icon size={12}><path d="M8 12L4.500 6a3.800 3.800 0 117 0z" fill="#e0a828" /><circle cx="8" cy="4.500" r="1.300" fill="#fff" /><path d="M1 15h14" stroke="#667" strokeWidth="1.200" /></Icon>Select By<Caret color="#777" /></ToolText>
      <ToolText $w={60}><Icon size={12}><path d="M0 6h6" stroke="#e0a020" strokeWidth="2" /><path d="M5 4l3-2h7v9l-2 3H5z" fill="#2cb84a" stroke="#125c1e" /><path d="M5 5h8v9" stroke="#125c1e" /></Icon>Convert<Caret color="#777" /></ToolText>
      <OverflowButton aria-label="More selection tools"><Caret color="#222" w={6} /></OverflowButton>
    </Toolbar>
  );
}

/* ---------- viewport ---------- */

const Viewport = styled.div`
  position: relative;
  flex: 1;
  min-height: 373px;
  background: linear-gradient(#6c8bdd 0%, #8ca4e6 28%, #b9c8f1 55%, #dce4f9 78%, #ffffff 100%);
  color: #10131c;
`;

const Scene = styled.svg`
  position: absolute;
  inset: 0;
  width: 100%;
  height: 100%;
`;

const ResultInfo = styled.div`
  position: absolute;
  left: 13px;
  top: 11px;
  font-size: 9px;
  line-height: 13px;
  p { margin: 0; white-space: nowrap; }
`;

const Legend = styled.div`
  position: absolute;
  left: 12px;
  top: 73px;
  display: flex;
  gap: 7px;
`;

const LegendLabels = styled.div`
  font-size: 10px;
  line-height: 15px;
  display: grid;
  grid-template-rows: 15px 15px 20px 23px 15px;
`;

const Logo = styled.div`
  position: absolute;
  right: 6px;
  top: 6px;
  width: 93px;
  color: #fff;
  font-weight: 700;
  text-align: right;
`;

const Wordmark = styled.div`
  height: 29px;
  display: flex;
  justify-content: flex-end;
  font-size: 32px;
  line-height: 26px;
  svg { margin-top: 1px; }
`;

const Release = styled.div`
  font-size: 15px;
  line-height: 18px;
`;

const Edition = styled.div`
  margin-top: 2px;
  padding: 3px 13px 0 0;
  border-top: 1px solid #fff;
  font-size: 16px;
  line-height: 18px;
`;

const Triad = styled.svg`
  position: absolute;
  right: 2px;
  bottom: 52px;
`;

const CX = 769.5;
const CY = 344;
const RX = 87;
const RY = 54;

/* half height of the waisted plate at a given x */
const halfHeight = (x: number) => {
  const d = (x - CX) / 78;
  const far = Math.abs(x - CX) / 365;
  return 129 + 2.4 * far ** 6 - 11 * Math.exp((-d * d) / 2) + 0.4 * far;
};

/* horizontal position of a mesh point: end faces bow outward, columns lean near the waist */
const bow = (x: number, t: number) => {
  const s = (x - CX) / 365;
  const near = Math.exp(-(((Math.abs(x - CX) - 95) / 45) ** 2));
  return x + 2 * s ** 5 * (1 - t * t) - Math.sign(s) * near * 10 * Math.abs(t) * (1 - t * t);
};

const meshPoint = (x: number, t: number) => `${bow(x, t).toFixed(1)} ${(CY + t * halfHeight(x)).toFixed(1)}`;

const X0 = 405.5;
const X1 = 1133.5;
const columns = 143;
const rows = 51;

const horizontals = Array.from({ length: rows + 1 }, (_, r) => {
  const t = -1 + (2 * r) / rows;
  const pts = Array.from({ length: 74 }, (_, i) => meshPoint(X0 + ((X1 - X0) * i) / 73, t));
  return `M${pts.join("L")}`;
}).join("");

const verticals = Array.from({ length: columns + 1 }, (_, c) => {
  const x = X0 + ((X1 - X0) * c) / columns;
  const pts = Array.from({ length: 25 }, (_, i) => meshPoint(x, -1 + i / 12));
  return `M${pts.join("L")}`;
}).join("");

const outline = (() => {
  const top = Array.from({ length: 74 }, (_, i) => meshPoint(X0 + ((X1 - X0) * i) / 73, -1));
  const right = Array.from({ length: 13 }, (_, i) => meshPoint(X1, -1 + i / 6));
  const bottom = Array.from({ length: 74 }, (_, i) => meshPoint(X1 - ((X1 - X0) * i) / 73, 1));
  const left = Array.from({ length: 13 }, (_, i) => meshPoint(X0, 1 - i / 6));
  return `M${[...top, ...right, ...bottom, ...left].join("L")}Z`;
})();

const ring = (g: number) =>
  `M${CX - RX - g} ${CY}a${RX + g} ${RY + g} 0 1 0 ${2 * (RX + g)} 0a${RX + g} ${RY + g} 0 1 0 ${-2 * (RX + g)} 0z`;

const spokes = Array.from({ length: 92 }, (_, i) => {
  const a = (i / 92) * Math.PI * 2;
  const c = Math.cos(a);
  const s = Math.sin(a);
  return `M${(CX + RX * c).toFixed(1)} ${(CY + RY * s).toFixed(1)}L${(CX + (RX + 10) * c).toFixed(1)} ${(CY + (RY + 10) * s).toFixed(1)}`;
}).join("");

const safePatch = "M585 344C589 328 612 321 634 321C648 321 666 324 666 332L665 346L667 360C664 366 648 368 634 368C610 367 589 360 585 344Z";
const mirror = `translate(${2 * CX} 0) scale(-1 1)`;

const Flag = ({ x, y, color, label }: { x: number; y: number; color: string; label: string }) => (
  <g>
    <path d={`M${x} ${y}h26l7 7.500-7 7.500h-26z`} fill={color} stroke="#223" strokeWidth="0.700" />
    <rect x={x + 33} y={y + 5} width="3" height="3" fill="#fff" stroke="#111" strokeWidth="0.800" />
    <text x={x + 3} y={y + 12} fontSize="10" fill="#fff">{label}</text>
  </g>
);

const Model = () => (
  <Scene viewBox="258 157 1022 373" role="img" aria-label="Safety factor contour on the plate">
    <defs>
      <clipPath id="plate"><path d={`${outline}${ring(0)}`} clipRule="evenodd" /></clipPath>
      <clipPath id="outer"><path d={`${outline}${ring(10)}`} clipRule="evenodd" /></clipPath>
    </defs>
    <g clipPath="url(#plate)">
      <path d={outline} fill="#b07e16" />
      <g fill="#06b01a">
        <path d={safePatch} />
        <path d={safePatch} transform={mirror} />
        <path d="M687 312l8-8 10 4-16 12zM687 376l8 8 10-4-16-12zM834 302l10 3 8 11-6 4zM834 386l10-3 6-8-6-6z" />
      </g>
      <g fill="#0a0ab4">
        <path d="M636 338h11q5 5 5 6t-5 6h-11q-5-5-5-6t5-6z" />
        <path d="M891 338h11q5 5 5 6t-5 6h-11q-5-5-5-6t5-6z" />
        <path d="M693 311l5-4 3 4zM693 377l5 5 3-5zM833 382l5-6 6 2z" />
      </g>
      <path d="M734 296Q745 283 753 281H784Q794 283 805 296ZM734 392Q745 403 753 406H782Q794 404 805 392Z" fill="#bd1010" />
      <path d={spokes + ring(5) + ring(10)} fill="none" stroke="#1c1400" strokeWidth="0.700" opacity="0.850" />
    </g>
    <g clipPath="url(#outer)" fill="none" stroke="#140e00" strokeWidth="0.850" opacity="0.900">
      <path d={horizontals} />
      <path d={verticals} />
    </g>
    <path d={outline + ring(0)} fill="none" stroke="#1c1400" strokeWidth="1" />
    <Flag x={803} y={302} color="#0a10f0" label="Max" />
    <Flag x={734} y={391} color="#f50a0a" label="Min" />
    <g>
      <rect x="603.500" y="497.500" width="330" height="5" fill="#fff" stroke="#111" />
      <path d="M603 497h83v6h-83zM768 497h83v6h-83z" fill="#000" />
      <g fontSize="10" fill="#111" textAnchor="middle">
        <text x="603" y="494">0.00</text>
        <text x="768" y="494">250.00</text>
        <text x="947" y="494">500.00 (mm)</text>
        <text x="685" y="514">125.00</text>
        <text x="851" y="514">375.00</text>
      </g>
    </g>
  </Scene>
);

/* ---------- graph ---------- */

const GraphBody = styled.div`
  flex: 1;
  padding: 21px 20px 0 27px;
  text-align: center;
`;

const ChartSvg = styled.svg`
  width: 100%;
  height: 41px;
  overflow: visible;
`;

const AxisTitle = styled.div`
  margin-top: 10px;
  font-size: 10px;
  line-height: 12px;
  font-weight: 700;
  color: #222;
`;

const Timeline = styled.div`
  height: 12px;
  margin-top: 6px;
  border: 1px solid #b0b0b0;
`;

const Chart = () => (
  <ChartSvg aria-label="Time history">
    {Array.from({ length: 11 }, (_, i) => (
      <line key={i} x1="-6" x2="0" y1={0.5 + i * 3.4} y2={0.5 + i * 3.4} stroke="#b0b0b0" />
    ))}
    <line x1="0" x2="100%" y1="0.500" y2="0.500" stroke="#b8b8b8" />
    <line x1="0" x2="100%" y1="34.500" y2="34.500" stroke="#a8a8a8" />
    <line x1="0.500" x2="0.500" y1="0" y2="34" stroke="#d8d8d8" />
    <line x1="100%" x2="100%" y1="0" y2="35" stroke="#b8b8b8" />
    {Array.from({ length: 11 }, (_, i) => (
      <line key={i} x1={`${i * 10}%`} x2={`${i * 10}%`} y1="35" y2="40" stroke="#a8a8a8" />
    ))}
    <rect x="-1" y="-1" width="3" height="3" fill="#1a8c1a" />
    <rect x="-1" y="28" width="3" height="3" fill="#1a1aa0" />
    <rect x="-1" y="33" width="3" height="3" fill="#a81818" />
  </ChartSvg>
);

const FilmIcon = ({ c }: { c: string }) => (
  <Icon size={13}>
    <path d="M1 1h14v11H1z" fill="#fff" stroke={c} strokeWidth="1.500" />
    <path d="M6 1v11M10 1v11" stroke={c} strokeWidth="1.500" />
    <path d="M1 15h14" stroke="#c03030" strokeWidth="1.500" strokeDasharray="2 1" />
  </Icon>
);

function GraphPanel() {
  return (
    <Panel>
      <PanelHeader title="Graph" h={18} />
      <Toolbar $h={21}>
        <Grip $m="0 9px 0 8px" />
        <ToolText $w={50}>Animation</ToolText>
        <Tool aria-label="First frame"><Icon><path d="M2 1v14" stroke="#888" strokeWidth="2" /><path d="M14 2v12L6 8z" fill="#c4c4c8" /></Icon></Tool>
        <Tool aria-label="Play"><Icon><path d="M3 1l11 7-11 7z" fill="#d09a10" /></Icon></Tool>
        <Tool $on aria-label="Stop"><Icon><path d="M1 1h14v14H1z" fill="#d09a10" stroke="#555" /></Icon></Tool>
        <Tool aria-label="Last frame"><Icon><path d="M14 1v14" stroke="#888" strokeWidth="2" /><path d="M2 2v12l8-6z" fill="#c4c4c8" /></Icon></Tool>
        <ToolRule $m="0 3px" />
        <Tool $on aria-label="Distributed"><FilmIcon c="#2ca04a" /></Tool>
        <Tool aria-label="Result sets"><FilmIcon c="#2468c4" /></Tool>
        <ToolRule $m="0 3px 0 1px" />
        <Dropdown label="Frames" value="20 Frames" w={83} h={18} fs={10} />
        <Dropdown label="Duration" value="2 Sec (Auto)" w={83} h={18} fs={10} />
        <ToolRule $m="0 3px" />
        <Tool aria-label="Export video"><Icon size={13}><path d="M1 1h13v9H1z" fill="#fff" stroke="#444" strokeWidth="1.500" /><path d="M3 5h9" stroke="#c03030" strokeWidth="2" strokeDasharray="2 1" /><path d="M8 8h7v7H8z" fill="#dce8fa" stroke="#3b76c6" /></Icon></Tool>
        <ToolRule $m="0 1px 0 2px" />
        <Tool aria-label="Zoom play"><Zoomer mark="#d0a030" sign="M6 4v6l3-3z" /></Tool>
        <Tool aria-label="Bands"><Icon>{["#e02020", "#e02020", "#20b030", "#20b030", "#2020c8"].map((c, i) => <path key={i} d={`M0 ${2 + i * 3}h16`} stroke={c} strokeWidth="2.400" strokeDasharray="3 1" />)}</Icon></Tool>
        <Tool aria-label="Probe curve"><Icon><path d="M1 14q4 0 7-6t7-5M2 5l12 3" stroke="#b0b0b4" strokeWidth="1.400" /></Icon></Tool>
        <Tool aria-label="Wrench"><Icon><path d="M1 13l7-3M6 5l5-2 4 3-3 4-5 1z" fill="#aaa" stroke="#aaa" strokeWidth="2" /></Icon></Tool>
        <ToolRule $m="0 3px 0 2px" />
        <Tool aria-label="Table view"><Icon><path d="M1 2h14v12H1z" fill="#999" /><path d="M2 6h12M2 10h12M6 3v10" stroke="#ccc" /></Icon></Tool>
        <IconButton $w={38} aria-label="More tools"><Icon size={12}><path d="M5 1l3 2 3-2M5 5l3 2 3-2" stroke="#444" strokeWidth="1.200" /><path d="M4 11h8l-4 4z" fill="#222" /></Icon></IconButton>
      </Toolbar>
      <GraphBody>
        <Chart />
        <AxisTitle>[s]</AxisTitle>
        <Timeline />
      </GraphBody>
    </Panel>
  );
}

/* ---------- tabular data ---------- */

const DataTable = styled.table`
  width: 236px;
  margin-left: 1px;
  border-collapse: collapse;
  table-layout: fixed;
  background: #fff;
  font-size: 9px;
  line-height: 12px;
  th, td { padding: 0 2px; text-align: left; font-weight: 400; white-space: nowrap; border-right: 1px solid #b8b8b8; border-bottom: 1px solid #b8b8b8; }
  th { height: 15px; }
  td { height: 14px; background: #e3e7e9; border-right-color: #d4d8da; }
  tbody th { background: #fff; padding: 0 0 0 1px; height: 14px; }
`;

const Series = styled(CheckLabel)<{ $c: string }>`
  color: ${(p) => p.$c};
`;

function TabularPanel() {
  return (
    <Panel $bg="#a0a0a0">
      <PanelHeader title="Tabular Data" h={17} />
      <DataTable>
        <colgroup><col width="11" /><col width="40" /><col width="64" /><col width="64" /><col width="57" /></colgroup>
        <thead>
          <tr>
            <th aria-label="Row" />
            <th>Time [s]</th>
            <th><Series $c="#b0202c"><CheckBox $sunken defaultChecked />Minimum</Series></th>
            <th><Series $c="#2a8c34"><CheckBox $sunken defaultChecked />Maximum</Series></th>
            <th><Series $c="#2626b8"><CheckBox $sunken defaultChecked />Average</Series></th>
          </tr>
        </thead>
        <tbody>
          <tr><th>1</th><td>1.</td><td>0.66029</td><td>15.</td><td>2.8837</td></tr>
        </tbody>
      </DataTable>
    </Panel>
  );
}

/* ---------- status bar ---------- */

const StatusBar = styled.footer`
  height: 15px;
  display: flex;
  align-items: center;
  justify-content: flex-end;
  padding: 3px 5px 0 0;
  background: #0078cd;
  color: #fff;
  font-size: 10px;
  white-space: nowrap;
`;

const StatusItem = styled.span<{ $ml?: number }>`
  margin-left: ${(p) => p.$ml || 8}px;
  display: flex;
  align-items: center;
  gap: 3px;
`;

export default function App() {
  return (
    <Page>
      <GlobalStyle />
      <TitleBar>
        <QuickAccess>
          <Icon size={14}><path d="M0 0h16v16H0z" fill="#111" /><circle cx="5.500" cy="10" r="2.800" stroke="#e0a820" strokeWidth="2" strokeDasharray="2 0.600" /><circle cx="11" cy="5" r="2.600" stroke="#f0c030" strokeWidth="2" strokeDasharray="2 0.600" /></Icon>
          <Divider $h={16} $m="0" />
          <IconButton aria-label="Save"><Disk /></IconButton>
          <IconButton aria-label="Undo"><Icon size={12}><path d="M11 3.500a6 6 0 11-5-1" stroke="#333" strokeWidth="1.600" /><path d="M8 1h6v5" stroke="#333" strokeWidth="1.600" /></Icon></IconButton>
          <IconButton aria-label="Customize"><Icon size={7} vb={7}><path d="M1 1h5" stroke="#444" /><path d="M1 3h5L3.500 6z" fill="#444" /></Icon></IconButton>
        </QuickAccess>
        <ContextTab>Context</ContextTab>
        <WindowTitle>A : Static Structural - Mechanical [Ansys Mechanical Enterprise]</WindowTitle>
        <WindowButtons>
          <IconButton $w={17} aria-label="Minimize"><Icon size={10} vb={10}><path d="M1 6h8" stroke="#111" strokeWidth="1.500" /></Icon></IconButton>
          <IconButton $w={17} aria-label="Restore"><Icon size={10} vb={10}><path d="M1 4h6v5H1zM3 4V1.500h6v5H7" stroke="#222" strokeWidth="1.200" /></Icon></IconButton>
          <IconButton $w={17} aria-label="Close window"><Icon size={10} vb={10}><path d="M1 1l8 8M9 1L1 9" stroke="#111" strokeWidth="1.500" /></Icon></IconButton>
        </WindowButtons>
      </TitleBar>
      <TabRow>
        <Tab $w={46} $kind="file">File</Tab>
        <Tab $w={57}>Home</Tab>
        <Tab $w={49} $kind="active">Result</Tab>
        <Tab $w={55}>Display</Tab>
        <Tab $w={63}>Selection</Tab>
        <Tab $w={75}>Automation</Tab>
        <Tab $w={61}>Add-ons</Tab>
        <Tab $w={118}>Learning and Support</Tab>
        <TabTools>
          <QuickLaunch placeholder="Quick Launch" aria-label="Quick launch" />
          <IconButton aria-label="Collapse ribbon"><Icon size={10} vb={10}><path d="M1 7l4-4 4 4" stroke="#d0a030" strokeWidth="1.600" /></Icon></IconButton>
          <IconButton aria-label="Tasks"><Icon size={12}><path d="M2 3l11-2 2 11-11 3z" fill="#fff" stroke="#666" strokeWidth="1.300" /><path d="M5 8l3 3 5-7" stroke="#d0a030" strokeWidth="1.800" /></Icon></IconButton>
          <IconButton aria-label="Help">
            <Icon size={12}><circle cx="8" cy="8" r="7.500" fill="#3f8ae0" /><path d="M5.500 6.300a2.500 2.500 0 114 2Q8 9.200 8 10.200M8 11.500v1.600" stroke="#fff" strokeWidth="1.600" /></Icon>
            <Caret color="#333" />
          </IconButton>
        </TabTools>
      </TabRow>
      <RibbonBar />
      <Workspace>
        <LeftDock>
          <OutlinePanel />
          <DetailsPanel />
        </LeftDock>
        <Stage>
          <GraphicsToolbar />
          <Viewport>
            <Model />
            <ResultInfo>
              <p><b>A: Static Structural</b></p>
              <p>Safety Factor</p>
              <p>Type: Safety Factor</p>
              <p>30-01-2024 16:28</p>
            </ResultInfo>
            <Legend>
              <svg width="14" height="84" aria-hidden="true">
                <rect x="0.500" y="7" width="13" height="16" fill="#0a0af5" stroke="#222" />
                <rect x="0.500" y="23" width="13" height="16" fill="#0af020" stroke="#222" />
                <rect x="0.500" y="39" width="13" height="16" fill="#ffae0a" stroke="#222" />
                <rect x="0.500" y="55" width="13" height="16" fill="#f50a0a" stroke="#222" />
                <path d="M0 59.500h14M0 8.500h14" stroke="#222" />
                <path d="M6.500 71v11.500H14" stroke="#444" fill="none" />
              </svg>
              <LegendLabels>
                <b>15 Max</b>
                <span>10</span>
                <span>5</span>
                <b>0.66029 Min</b>
                <span>0</span>
              </LegendLabels>
            </Legend>
            <Logo>
              <Wordmark>
                <svg width="21" height="24" viewBox="0 0 21 24" aria-label="A" role="img">
                  <path d="M0 24L8 1h5L5 24z" fill="#fff" />
                  <path d="M10 9.500L13.500 1 21 24h-6z" fill="#fff" />
                </svg>
                nsys
              </Wordmark>
              <Release>2024 R1</Release>
              <Edition>STUDENT</Edition>
            </Logo>
            <Triad width="80" height="80" viewBox="0 0 80 80" aria-hidden="true">
              <path d="M8 66V26" stroke="#0a7a1a" strokeWidth="3" />
              <path d="M8 13l-5 14h10z" fill="#0a8c1e" />
              <path d="M8 66h42" stroke="#b80c14" strokeWidth="3" />
              <path d="M62 66l-13-5v10z" fill="#c00c14" />
              <circle cx="8" cy="66" r="5.500" fill="#0a0a9c" />
              <circle cx="33" cy="41" r="5.500" fill="#16aeb4" />
              <circle cx="31.500" cy="39" r="2" fill="#5ad6da" />
              <text x="8" y="10" fontSize="10" fill="#3c9c54">Y</text>
              <text x="70" y="66" fontSize="10" fill="#d8303c">X</text>
            </Triad>
          </Viewport>
          <BottomDock>
            <GraphPanel />
            <TabularPanel />
          </BottomDock>
        </Stage>
      </Workspace>
      <StatusBar>
        <StatusItem>
          <Icon size={13}><path d="M1 4h12v7H6l-3 4v-4H1z" fill="#f2e6a0" /><circle cx="9" cy="6" r="5" fill="#1420b8" stroke="#dde" /><path d="M9 5.500v4M9 3v1.500" stroke="#fff" strokeWidth="1.800" /></Icon>1 Message
        </StatusItem>
        <StatusItem $ml={13}>No Selection</StatusItem>
        <StatusItem $ml={16}><Icon size={7} vb={7}><path d="M0 5.500h7L3.500 1z" fill="#fff" /></Icon>Metric (mm, kg, N, s, mV, mA)</StatusItem>
        <StatusItem>Degrees</StatusItem>
        <StatusItem>rad/s</StatusItem>
        <StatusItem>Celsius</StatusItem>
      </StatusBar>
    </Page>
  );
}
